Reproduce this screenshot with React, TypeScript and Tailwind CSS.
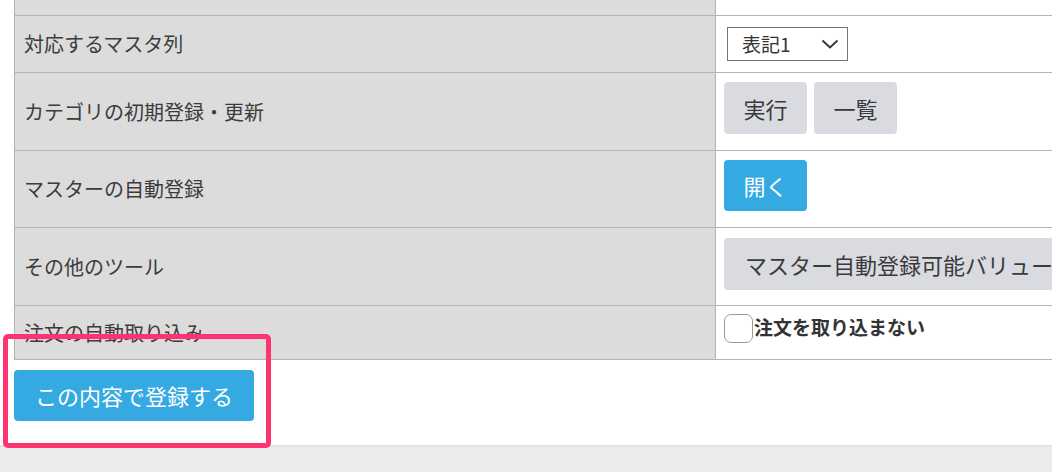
import React from 'react';

const font = { fontFamily: '"Noto Sans CJK JP", "Noto Sans", sans-serif' };

interface RowProps {
    label?: string;
    height: string;
    children?: React.ReactNode;
}

const Row: React.FC<RowProps> = ({ label, height, children }) => (
    <div className={`flex border-b border-[#b4b4b4] ${height}`}>
        <div className="w-[702px] shrink-0 border-l border-r border-[#b4b4b4] bg-[#dcdcdc] flex items-center pl-[9px] text-[20px] text-[#3c3c3c]">
            {label}
        </div>
        <div className="flex-1 bg-white pl-[8px] flex items-start">{children}</div>
    </div>
);

const GrayButton: React.FC<{ children: React.ReactNode; className?: string }> = ({ children, className }) => (
    <button
        type="button"
        className={`h-[52px] rounded-[4px] bg-[#d9dbe1] text-[22px] text-[#3a3a3a] whitespace-nowrap ${className ?? 'w-[83px]'}`}
    >
        {children}
    </button>
);

export default function App() {
    return (
        <div className="relative w-[1052px] h-[472px] overflow-hidden bg-[#ebebeb]" style={font}>
            <div className="h-[445px] bg-white pl-[14px] shadow-[0_1px_2px_rgba(0,0,0,0.08)]">
                <Row height="h-[16px]" />
                <Row label="対応するマスタ列" height="h-[57px]">
                    <div className="mt-[11px] ml-[3px] w-[121px] h-[34px] border border-[#767676] flex items-center justify-between pl-[14px] pr-[8px] text-[19px] text-[#333]">
                        <span>表記1</span>
                        <svg width="18" height="10" viewBox="0 0 18 10" fill="none">
                            <path d="M1.5 1.5 L9 8.5 L16.5 1.5" stroke="#333" strokeWidth="1.8" />
                        </svg>
                    </div>
                </Row>
                <Row label="カテゴリの初期登録・更新" height="h-[78px]">
                    <div className="mt-[9px] flex gap-[7px]">
                        <GrayButton>実行</GrayButton>
                        <GrayButton>一覧</GrayButton>
                    </div>
                </Row>
                <Row label="マスターの自動登録" height="h-[77px]">
                    <button
                        type="button"
                        className="mt-[9px] w-[83px] h-[51px] rounded-[4px] bg-[#35aae2] text-white text-[22px]"
                    >
                        開く
                    </button>
                </Row>
                <Row label="その他のツール" height="h-[78px]">
                    <GrayButton className="mt-[10px] px-[21px] text-left">マスター自動登録可能バリュー一覧</GrayButton>
                </Row>
                <Row label="注文の自動取り込み" height="h-[54px]">
                    <label className="mt-[8px] flex items-center">
                        <span className="w-[29px] h-[29px] rounded-[7px] border border-[#9a9a9a] bg-white" />
                        <span className="ml-[1px] text-[19px] font-bold text-[#333] -mt-[3px]">注文を取り込まない</span>
                    </label>
                </Row>
                <button
                    type="button"
                    className="mt-[10px] w-[240px] h-[51px] rounded-[4px] bg-[#35aae2] text-white text-[22px]"
                >
                    この内容で登録する
                </button>
            </div>
            <div className="absolute left-[3px] top-[334px] w-[268px] h-[114px] border-[5px] border-[#ff3370] rounded-[5px]" />
        </div>
    );
}
